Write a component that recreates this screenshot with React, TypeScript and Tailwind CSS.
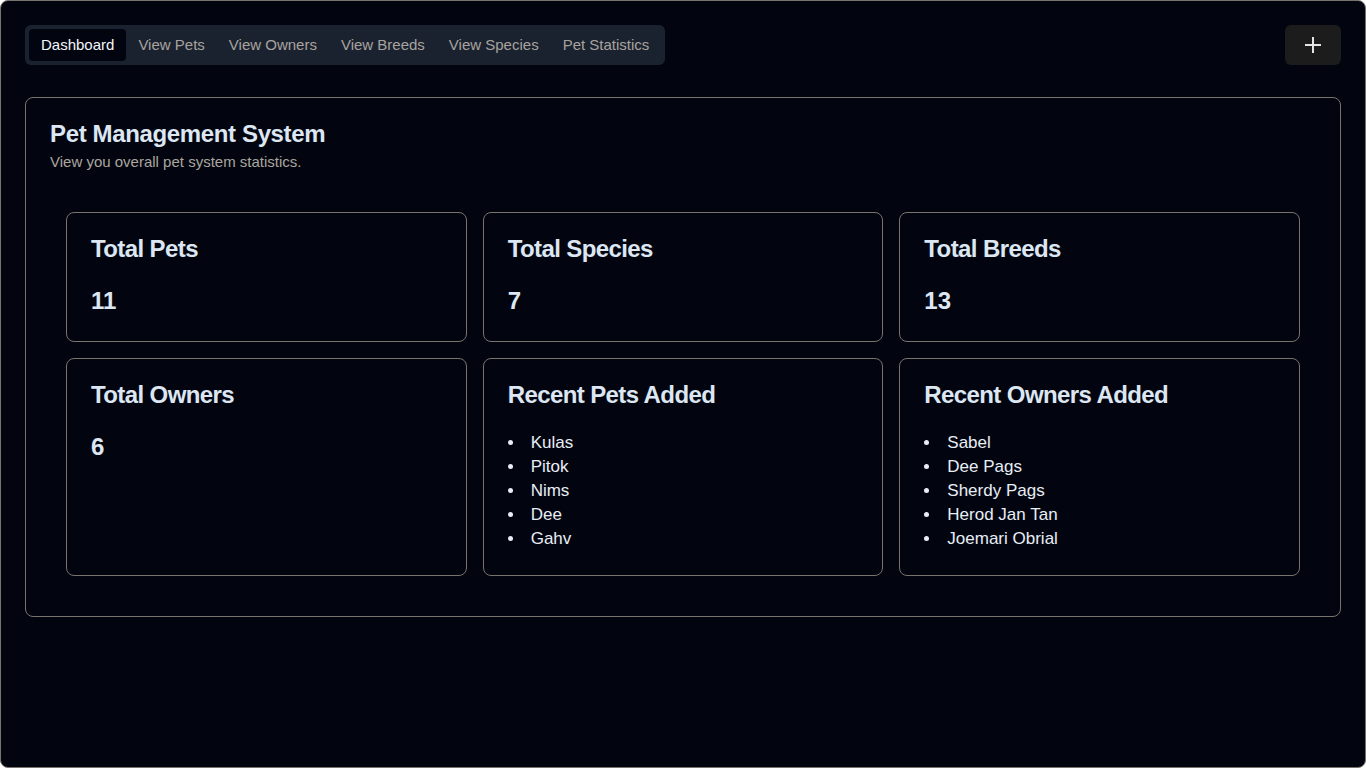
import { Plus } from "lucide-react"

type Stat = { title: string; value: number }

const tabs = ["Dashboard", "View Pets", "View Owners", "View Breeds", "View Species", "Pet Statistics"]

const stats: Stat[] = [
  { title: "Total Pets", value: 11 },
  { title: "Total Species", value: 7 },
  { title: "Total Breeds", value: 13 },
  { title: "Total Owners", value: 6 },
]

const recentPets = ["Kulas", "Pitok", "Nims", "Dee", "Gahv"]
const recentOwners = ["Sabel", "Dee Pags", "Sherdy Pags", "Herod Jan Tan", "Joemari Obrial"]

const Card = ({ title, children }: { title: string; children: React.ReactNode }) => (
  <div className="rounded-lg border border-[#78736d] bg-[#020510]">
    <div className="p-6">
      <h3 className="text-2xl font-bold leading-none tracking-tight text-[#dde7f3]">{title}</h3>
    </div>
    <div className="p-6 pt-0">{children}</div>
  </div>
)

const ListCard = ({ title, items }: { title: string; items: string[] }) => (
  <Card title={title}>
    <ul className="list-inside list-disc text-[17px] leading-6 text-[#e8eef5]">
      {items.map((item) => (
        <li key={item}>{item}</li>
      ))}
    </ul>
  </Card>
)

export default function App() {
  return (
    <div
      className="min-h-screen rounded-lg border border-[#78736d] bg-[#020510] p-6"
      style={{ fontFamily: '"Liberation Sans", Arial, sans-serif' }}
    >
      {/* top bar */}
      <div className="flex items-start justify-between">
        <nav className="flex items-center rounded-md bg-[#1a2230] p-1">
          {tabs.map((tab, i) => (
            <button
              key={tab}
              className={
                i === 0
                  ? "rounded-sm bg-[#020510] px-3 py-1.5 text-[15px] leading-5 text-[#f4f7fb]"
                  : "rounded-sm px-3 py-1.5 text-[15px] leading-5 text-[#a8a29e]"
              }
            >
              {tab}
            </button>
          ))}
        </nav>
        <button className="flex h-10 w-14 items-center justify-center rounded-md bg-[#1c1c1c] text-[#e7e5e4]">
          <Plus size={24} strokeWidth={2} strokeLinecap="square" />
        </button>
      </div>

      {/* main card */}
      <div className="mt-8 rounded-lg border border-[#78736d]">
        <div className="flex flex-col gap-1.5 p-6">
          <h2 className="text-2xl font-bold leading-none tracking-[-0.015em] text-[#dde7f3]">
            Pet Management System
          </h2>
          <p className="text-[15px] leading-5 text-[#aba59f]">View you overall pet system statistics.</p>
        </div>
        <div className="p-6 pt-0">
          <div className="grid grid-cols-3 gap-4 p-4">
            {stats.map((s) => (
              <Card key={s.title} title={s.title}>
                <p className="text-2xl font-bold leading-8 text-[#dde7f3]">{s.value}</p>
              </Card>
            ))}
            <ListCard title="Recent Pets Added" items={recentPets} />
            <ListCard title="Recent Owners Added" items={recentOwners} />
          </div>
        </div>
      </div>
    </div>
  )
}
